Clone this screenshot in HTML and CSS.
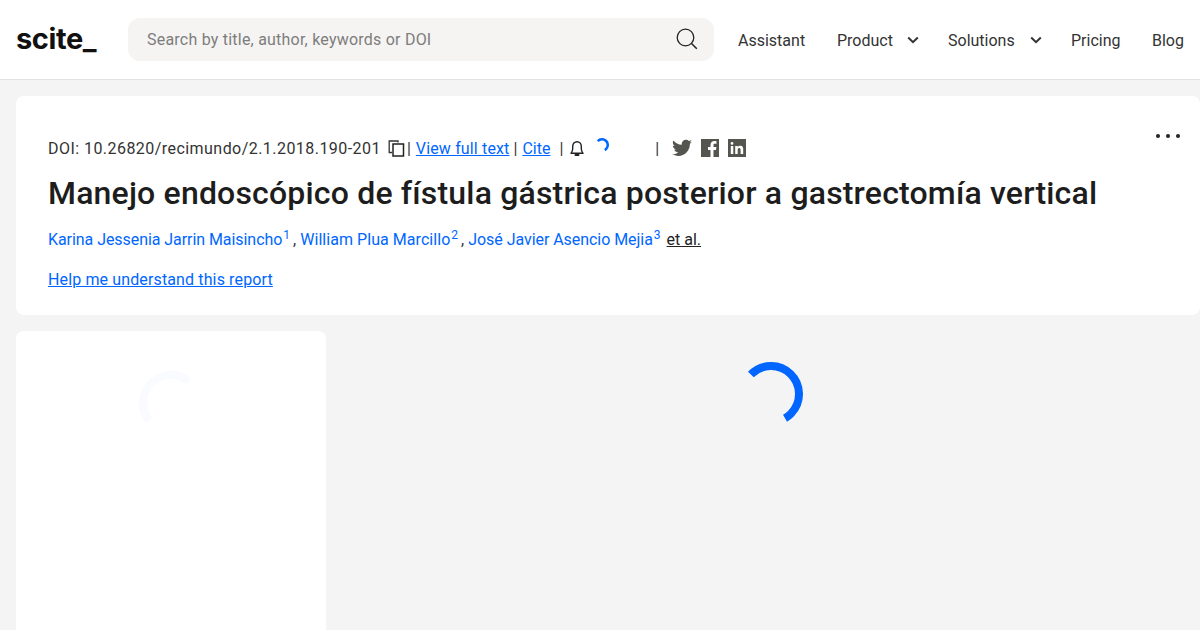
FILE: index.html
```html
<!DOCTYPE html>
<html lang="es">
<head>
<meta charset="utf-8">
<title>scite</title>
<link rel="stylesheet" href="styles.css">
</head>
<body>
<header class="topbar">
  <a class="logo">scite_</a>
  <div class="search">
    <span class="placeholder">Search by title, author, keywords or DOI</span>
    <svg class="search-icon" width="22" height="22" viewBox="0 0 22 22"><circle cx="9.500" cy="9.500" r="8.300" fill="none" stroke="#222" stroke-width="1.300"/><path d="M15.500 15.500L20.800 20.800" stroke="#222" stroke-width="1.500"/></svg>
  </div>
  <nav class="nav">
    <a class="nav-item nav-assistant">Assistant</a>
    <a class="nav-item nav-product">Product<svg class="chev" width="12" height="8" viewBox="0 0 12 8"><path d="M1.200 1.500L6 6.200L10.800 1.500" fill="none" stroke="#333" stroke-width="2"/></svg></a>
    <a class="nav-item nav-solutions">Solutions<svg class="chev" width="12" height="8" viewBox="0 0 12 8"><path d="M1.200 1.500L6 6.200L10.800 1.500" fill="none" stroke="#333" stroke-width="2"/></svg></a>
    <a class="nav-item nav-pricing">Pricing</a>
    <a class="nav-item">Blog</a>
  </nav>
</header>
<main class="page">
  <section class="report">
    <div class="dots"><i></i><i></i><i></i></div>
    <div class="meta">
      <span class="doi">DOI: 10.26820/recimundo/2.1.2018.190-201</span>
      <svg class="copy" width="17" height="17" viewBox="0 0 17 17"><path d="M10 2.500V1H1.200V12.500H4" fill="none" stroke="#333" stroke-width="1.300"/><rect x="5" y="4" width="10.500" height="12" fill="none" stroke="#222" stroke-width="1.500"/></svg>
      <span class="sep sep-a">|</span>
      <a class="link link-full">View full text</a>
      <span class="sep sep-b">|</span>
      <a class="link">Cite</a>
      <span class="sep sep-c">|</span>
      <svg class="bell" width="14" height="17" viewBox="0 0 14 17"><path d="M1 13.200c1.300-1.200 1.700-2.400 1.700-4.600V6.500C2.700 3.800 4.600 1.700 7 1.700s4.300 2.100 4.300 4.800v2.100c0 2.200.4 3.400 1.700 4.600z" fill="none" stroke="#222" stroke-width="1.400" stroke-linejoin="round"/><path d="M5.400 15h3.200" stroke="#222" stroke-width="1.800" stroke-linecap="round"/></svg>
      <svg class="mini-spin" width="16" height="16" viewBox="0 0 16 16"><circle class="arc" cx="8" cy="8" r="5.800" pathLength="360" stroke-dasharray="199 161" transform="rotate(223 8 8)"/></svg>
      <span class="sep sep-d">|</span>
      <svg class="social" width="20" height="18" viewBox="0 0 24 20"><path fill="#555550" d="M24 2.400c-.9.400-1.800.7-2.800.8 1-.6 1.800-1.600 2.200-2.700-1 .6-2 1-3.100 1.200C19.300.7 18 .1 16.600.1c-2.700 0-4.900 2.200-4.900 4.900 0 .4 0 .8.100 1.100C7.700 5.900 4.100 4 1.700.9 1.300 1.600 1 2.500 1 3.400c0 1.700.9 3.200 2.200 4.100-.8 0-1.600-.2-2.200-.6v.1c0 2.400 1.700 4.400 3.900 4.800-.4.100-.8.200-1.300.2-.3 0-.6 0-.9-.1.600 2 2.400 3.400 4.600 3.400-1.700 1.300-3.800 2.100-6.100 2.100-.4 0-.8 0-1.200-.1C2.200 18.700 4.800 19.500 7.500 19.500c9.100 0 14-7.500 14-14v-.6c1-.7 1.800-1.600 2.500-2.500z"/></svg>
      <svg class="social" width="18" height="18" viewBox="0 0 18 18"><path fill="#555550" fill-rule="evenodd" d="M0 0H18V18H12.500V11H15L15.400 8H12.500V6.200C12.500 5.300 12.800 4.800 14 4.800H15.500V2.200C15.200 2.100 14.300 2 13.300 2 11.100 2 9.500 3.400 9.500 5.900V8H7V11H9.500V18H0Z"/></svg>
      <svg class="social" width="18" height="18" viewBox="0 0 18 18"><path fill="#555550" fill-rule="evenodd" d="M0 0H18V18H0ZM2.800 7V15H5.300V7ZM4 3A1.400 1.400 0 1 0 4 5.800 1.400 1.400 0 1 0 4 3ZM7.200 7V15H9.700V10.900C9.700 9.800 10 8.900 11.300 8.900 12.500 8.900 12.600 10 12.600 11V15H15.200V10.500C15.200 8.300 14.700 6.800 12.200 6.800 11 6.800 10.200 7.400 9.800 8.100V7Z"/></svg>
    </div>
    <h1 class="title">Manejo endoscópico de fístula gástrica posterior a gastrectomía vertical</h1>
    <p class="authors"><a class="author">Karina Jessenia Jarrin Maisincho</a><sup>1</sup><span class="comma">,</span><a class="author author-b">William Plua Marcillo</a><sup>2</sup><span class="comma">,</span><a class="author author-c">José Javier Asencio Mejia</a><sup>3</sup><a class="etal">et al.</a></p>
    <a class="help">Help me understand this report</a>
  </section>
  <div class="lower">
    <aside class="side">
      <svg class="side-spin" width="64" height="64" viewBox="0 0 64 64"><circle class="arc arc-light" cx="32" cy="32" r="28" pathLength="360" stroke-dasharray="169 191" transform="rotate(141 32 32)"/></svg>
    </aside>
    <div class="content">
      <svg class="main-spin" width="64" height="64" viewBox="0 0 64 64"><circle class="arc arc-main" cx="32" cy="32" r="28" pathLength="360" stroke-dasharray="196 164" transform="rotate(224 32 32)"/></svg>
    </div>
  </div>
</main>
</body>
</html>
```

FILE: styles.css
```css
* { box-sizing: border-box; }
html, body { margin: 0; height: 630px; overflow: hidden; }
body { background: #f4f4f4; font-family: "Roboto", "Liberation Sans", sans-serif; color: #222; }
.topbar { height: 80px; background: #fff; border-bottom: 1px solid #e2e2e2; display: flex; align-items: center; padding-left: 16px; }
.logo { width: 112px; font-family: "Inter", sans-serif; font-weight: 700; font-size: 29px; line-height: 40px; letter-spacing: -0.4px; color: #111; margin-top: -2px; }
.search { width: 586px; height: 43px; margin-top: -1px; background: #f5f4f2; border-radius: 12px; display: flex; align-items: center; justify-content: space-between; padding: 0 16px 0 19px; }
.placeholder { font-size: 16px; color: #7d7d7d; letter-spacing: 0.22px; }
.nav { display: flex; align-items: center; margin-left: 24px; font-size: 16px; color: #333; padding-top: 1px; }
.nav-item { display: flex; align-items: center; white-space: nowrap; }
.nav-assistant { width: 99px; }
.nav-product { width: 111px; }
.nav-solutions { width: 123px; }
.nav-pricing { width: 81px; }
.nav-product .chev { margin-left: 14px; }
.nav-solutions .chev { margin-left: 15px; }
.page { padding: 16px 0 0 16px; }
.report { position: relative; width: 1184px; height: 219px; background: #fff; border-radius: 8px; padding: 38px 32px 0; }
.dots { position: absolute; top: 38px; right: 20px; display: flex; gap: 6px; }
.dots i { width: 4px; height: 4px; border-radius: 50%; background: #222; }
.meta { display: flex; align-items: center; height: 28px; font-size: 16px; color: #333; white-space: nowrap; }
.doi { letter-spacing: 0.45px; }
.copy { margin-left: 7px; }
.link { color: #0066ff; text-decoration: underline; }
.link-full { letter-spacing: 0.15px; }
.sep { color: #333; }
.sep-a { margin: 0 5px 0 2px; }
.sep-b { margin: 0 5px 0 4px; }
.sep-c { margin: 0 7px 0 9px; }
.bell { margin-right: 10px; }
.mini-spin { margin-top: -6px; }
.arc { fill: none; stroke: #0066ff; stroke-width: 2.500; }
.arc-main { stroke-width: 8; }
.arc-light { stroke: #fafbff; stroke-width: 8; }
.sep-d { margin: 0 13px 0 45px; }
.social { margin-right: 9px; }
.title { margin: 11px 0 0; font-size: 32px; line-height: 40px; font-weight: 500; color: #1d1d1d; white-space: nowrap; letter-spacing: 0.18px; }
.authors { margin: 15px 0 0; height: 24px; line-height: 24px; font-size: 16px; white-space: nowrap; color: #333; }
.author { color: #0066ff; letter-spacing: -0.06px; }
.author-b { letter-spacing: 0.05px; }
.author-c { letter-spacing: -0.05px; }
.authors sup { font-size: 12px; color: #0066ff; margin: 0 1px; line-height: 0; }
.comma { margin: 0 4px 0 2px; }
.etal { margin-left: 5px; color: #222; text-decoration: underline; }
.help { display: block; margin-top: 16px; line-height: 24px; font-size: 16px; letter-spacing: 0.13px; color: #0066ff; text-decoration: underline; }
.lower { display: flex; margin-top: 16px; }
.side { width: 310px; height: 299px; background: #fff; border-radius: 8px 8px 0 0; padding: 40px 0 0 123px; }
.side-spin, .main-spin { display: block; }
.content { margin-left: 16px; width: 859px; height: 299px; display: flex; justify-content: center; padding-top: 31px; }
```
